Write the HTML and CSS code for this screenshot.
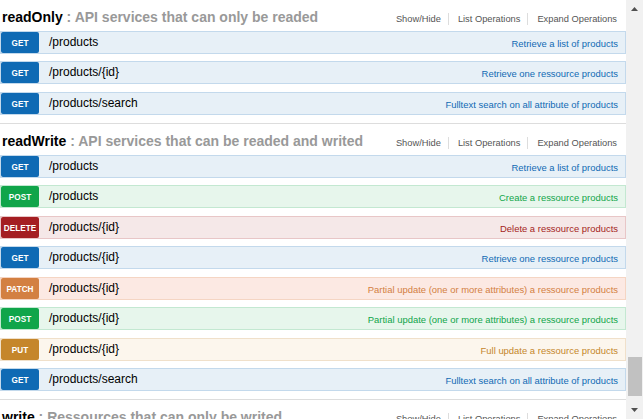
FILE: index.html
```html
<!DOCTYPE html>
<html lang="en">
<head>
<meta charset="utf-8">
<title>API</title>
<link rel="stylesheet" href="styles.css">
</head>
<body>
<main class="content">
  <section class="resource">
    <div class="heading">
      <h2 class="title"><span class="name">readOnly</span> : API services that can only be readed</h2>
      <ul class="options"><li>Show/Hide</li><li>List Operations</li><li>Expand Operations</li></ul>
    </div>
    <ul class="ops">
      <li class="op get"><span class="method">GET</span><span class="path">/products</span><span class="summary">Retrieve a list of products</span></li>
      <li class="op get"><span class="method">GET</span><span class="path">/products/{id}</span><span class="summary">Retrieve one ressource products</span></li>
      <li class="op get"><span class="method">GET</span><span class="path">/products/search</span><span class="summary">Fulltext search on all attribute of products</span></li>
    </ul>
  </section>
  <section class="resource">
    <div class="heading">
      <h2 class="title"><span class="name">readWrite</span> : API services that can be readed and writed</h2>
      <ul class="options"><li>Show/Hide</li><li>List Operations</li><li>Expand Operations</li></ul>
    </div>
    <ul class="ops">
      <li class="op get"><span class="method">GET</span><span class="path">/products</span><span class="summary">Retrieve a list of products</span></li>
      <li class="op post"><span class="method">POST</span><span class="path">/products</span><span class="summary">Create a ressource products</span></li>
      <li class="op delete"><span class="method">DELETE</span><span class="path">/products/{id}</span><span class="summary">Delete a ressource products</span></li>
      <li class="op get"><span class="method">GET</span><span class="path">/products/{id}</span><span class="summary">Retrieve one ressource products</span></li>
      <li class="op patch"><span class="method">PATCH</span><span class="path">/products/{id}</span><span class="summary">Partial update (one or more attributes) a ressource products</span></li>
      <li class="op post"><span class="method">POST</span><span class="path">/products/{id}</span><span class="summary">Partial update (one or more attributes) a ressource products</span></li>
      <li class="op put"><span class="method">PUT</span><span class="path">/products/{id}</span><span class="summary">Full update a ressource products</span></li>
      <li class="op get"><span class="method">GET</span><span class="path">/products/search</span><span class="summary">Fulltext search on all attribute of products</span></li>
    </ul>
  </section>
  <section class="resource">
    <div class="heading">
      <h2 class="title"><span class="name">write</span> : Ressources that can only be writed</h2>
      <ul class="options"><li>Show/Hide</li><li>List Operations</li><li>Expand Operations</li></ul>
    </div>
  </section>
</main>
<div class="scrollbar" aria-hidden="true">
  <div class="arrow"><svg width="17" height="17" viewBox="0 0 17 17"><polygon points="5,11 12,11 8.5,7" fill="#505050"/></svg></div>
  <div class="track"><div class="thumb"></div></div>
  <div class="arrow"><svg width="17" height="17" viewBox="0 0 17 17"><polygon points="5,6 12,6 8.5,10" fill="#505050"/></svg></div>
</div>
</body>
</html>
```
FILE: styles.css
```css
* { box-sizing: border-box; }
html, body { margin: 0; height: 100%; }
body {
  display: flex;
  overflow: hidden;
  background: #fff;
  font-family: "Liberation Sans", Arial, sans-serif;
}
.content {
  flex: 1;
  min-width: 0;
  overflow: hidden;
}
.resource { border-bottom: 1px solid #ddd; }
.heading {
  display: flex;
  align-items: baseline;
  justify-content: space-between;
  height: 31px;
  padding: 7px 9px 0 2px;
}
.title {
  margin: 0;
  font-size: 14px;
  font-weight: bold;
  line-height: 20px;
  color: #999;
  white-space: nowrap;
}
.title .name { color: #000; }
.options {
  display: flex;
  list-style: none;
  margin: 0;
  padding: 0;
  font-size: 9.3px;
  line-height: 12px;
  color: #555;
}
.options li {
  padding: 0 7px 0 9px;
  border-right: 1px solid #ddd;
}
.options li:first-child { padding-left: 0; }
.options li:last-child { border-right: 0; padding-right: 0; }

.ops {
  list-style: none;
  margin: 0;
  padding: 0 0 0.6px;
}
.op {
  display: flex;
  height: 23px;
  margin-bottom: 7.45px;
  border: 1px solid;
  line-height: 21px;
  white-space: nowrap;
}
.method {
  width: 38px;
  height: 21px;
  border-radius: 2px;
  color: #fff;
  font-size: 8.2px;
  font-weight: bold;
  text-align: center;
  padding-top: 1px;
}
.path {
  margin-left: 10px;
  font-size: 12px;
  color: #000;
}
.summary {
  margin-left: auto;
  padding: 1px 7px 0 0;
  font-size: 9.45px;
}
.get { background: #e7f0f7; border-color: #c3d9ec; }
.get .method { background: #0f6ab4; }
.get .summary { color: #0f6ab4; }
.post { background: #e7f6ec; border-color: #c3e8d1; }
.post .method { background: #10a54a; }
.post .summary { color: #10a54a; }
.delete { background: #f5e8e8; border-color: #e8c6c7; }
.delete .method { background: #a41e22; }
.delete .summary { color: #a41e22; }
.patch { background: #fce9e3; border-color: #f5d5c3; }
.patch .method { background: #d38042; }
.patch .summary { color: #d38042; }
.put { background: #fcf6ed; border-color: #f0e0ca; }
.put .method { background: #c5862b; }
.put .summary { color: #c5862b; }

.scrollbar {
  width: 17px;
  flex: none;
  background: #f1f1f1;
  display: flex;
  flex-direction: column;
}
.arrow { height: 17px; flex: none; }
.arrow svg { display: block; }
.track { flex: 1; }
.thumb {
  margin: 340px 1px 0 2px;
  height: 39px;
  background: #c1c1c1;
}
```
